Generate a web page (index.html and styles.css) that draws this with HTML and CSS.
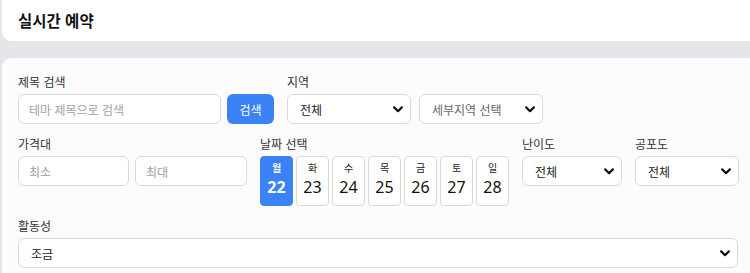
FILE: index.html
```html
<!DOCTYPE html>
<html lang="ko">
<head>
<meta charset="utf-8">
<link rel="stylesheet" href="styles.css">
</head>
<body>
<div class="page">
  <header class="head-card"><h1>실시간 예약</h1></header>
  <section class="filter-card">
    <div class="row">
      <div class="field">
        <label class="lbl">제목 검색</label>
        <div class="inline">
          <input class="ctl w-title" type="text" placeholder="테마 제목으로 검색">
          <button class="btn">검색</button>
        </div>
      </div>
      <div class="field">
        <label class="lbl">지역</label>
        <div class="inline gap8">
          <select class="ctl sel w-region"><option>전체</option></select>
          <select class="ctl sel w-region muted"><option>세부지역 선택</option></select>
        </div>
      </div>
    </div>
    <div class="row">
      <div class="field">
        <label class="lbl">가격대</label>
        <div class="inline">
          <input class="ctl w-min" type="text" placeholder="최소">
          <input class="ctl w-max" type="text" placeholder="최대">
        </div>
      </div>
      <div class="field">
        <label class="lbl">날짜 선택</label>
        <div class="dates">
          <div class="day active"><span class="dn">월</span><span class="dd">22</span></div>
          <div class="day"><span class="dn">화</span><span class="dd">23</span></div>
          <div class="day"><span class="dn">수</span><span class="dd">24</span></div>
          <div class="day"><span class="dn">목</span><span class="dd">25</span></div>
          <div class="day"><span class="dn">금</span><span class="dd">26</span></div>
          <div class="day"><span class="dn">토</span><span class="dd">27</span></div>
          <div class="day"><span class="dn">일</span><span class="dd">28</span></div>
        </div>
      </div>
      <div class="field">
        <label class="lbl">난이도</label>
        <select class="ctl sel w-diff"><option>전체</option></select>
      </div>
      <div class="field">
        <label class="lbl">공포도</label>
        <select class="ctl sel w-fear"><option>전체</option></select>
      </div>
    </div>
    <div class="row">
      <div class="field full">
        <label class="lbl">활동성</label>
        <select class="ctl sel"><option>조금</option></select>
      </div>
    </div>
  </section>
</div>
</body>
</html>
```
FILE: styles.css
```css
* { box-sizing: border-box; }
html, body { margin: 0; padding: 0; }
body {
  background: #e5e6ea;
  font-family: "Noto Sans CJK KR", "Noto Sans", sans-serif;
  color: #222;
  overflow: hidden;
  width: 750px;
  height: 273px;
}
.page {
  padding-left: 2px;
}
.head-card {
  background: #ffffff;
  border-radius: 0 0 0 9px;
  padding: 9px 16px 9px 16px;
  height: 41px;
}
.head-card h1 {
  margin: 0;
  font-size: 15.5px;
  line-height: 23px;
  font-weight: 700;
  color: #111;
}
.filter-card {
  margin-top: 17px;
  background: #fcfcfd;
  border-radius: 9px 0 0 0;
  padding: 16px 12px 16px 16px;
  display: flex;
  flex-direction: column;
  gap: 12px;
}
.row {
  display: flex;
  gap: 13px;
  align-items: flex-start;
}
.field {
  display: flex;
  flex-direction: column;
}
.field.full { flex: 1; }
.lbl {
  font-size: 12px;
  line-height: 16px;
  color: #333;
  margin-bottom: 4px;
}
.inline {
  display: flex;
  gap: 6px;
}
.inline.gap8 { gap: 8px; }
.ctl {
  height: 30px;
  border: 1px solid #d9d9dc;
  border-radius: 6px;
  background: #fff;
  font-family: inherit;
  font-size: 12px;
  color: #222;
  padding: 0 10px;
  outline: none;
}
.ctl::placeholder { color: #a0a0a6; }
.sel {
  appearance: none;
  -webkit-appearance: none;
  padding-left: 12px;
  padding-right: 24px;
  background-image: url("data:image/svg+xml;utf8,<svg xmlns='http://www.w3.org/2000/svg' width='10' height='7' viewBox='0 0 10 7'><path d='M1.2 1.4 L5 5.2 L8.8 1.4' fill='none' stroke='%23111' stroke-width='2.2' stroke-linecap='round' stroke-linejoin='round'/></svg>");
  background-repeat: no-repeat;
  background-position: right 7px center;
  background-size: 10px 7px;
}
.sel.muted { color: #666; }
.w-title { width: 203px; }
.w-region { width: 124px; }
.w-min { width: 111px; }
.w-max { width: 112px; }
.w-diff { width: 100px; }
.w-fear { width: 104px; }
.btn {
  width: 47px;
  height: 30px;
  border: none;
  border-radius: 6px;
  background: #3b82f6;
  color: #fff;
  font-family: inherit;
  font-size: 12px;
  padding: 0;
}
.dates {
  display: flex;
  gap: 3px;
}
.day {
  width: 33px;
  height: 50px;
  border: 1px solid #d9d9dc;
  border-radius: 4px;
  background: #fff;
  display: flex;
  flex-direction: column;
  align-items: center;
  padding-top: 4px;
}
.day .dn {
  font-size: 10px;
  line-height: 14px;
  color: #222;
}
.day .dd {
  font-size: 16px;
  line-height: 24px;
  color: #111;
  font-family: "Noto Sans", "Noto Sans CJK KR", sans-serif;
}
.day.active {
  background: #3b82f6;
  border-color: #3b82f6;
}
.day.active .dn, .day.active .dd {
  color: #fff;
  font-weight: 700;
}
```
